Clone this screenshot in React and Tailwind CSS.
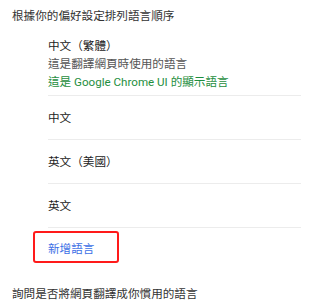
import React from 'react';

const languages = ['中文', '英文（美國）', '英文'];

function App() {
  return (
    <div className="w-[313px] h-[305px] bg-white overflow-hidden px-3 pt-[5px] text-[11.6px] text-[#333] font-['Noto_Sans_CJK_TC','Noto_Sans',sans-serif]">
      <div className="leading-5 h-5">根據你的偏好設定排列語言順序</div>

      <div className="ml-9 mt-[11px]">
        {/* 目前的主要語言 */}
        <div className="pb-[4px] border-b border-[#ececec]">
          <div className="leading-[18px] h-[18px] text-[#222]">中文（繁體）</div>
          <div className="leading-[18px] h-[18px] text-[#555]">這是翻譯網頁時使用的語言</div>
          <div className="leading-[18px] h-[18px] mt-[1px] text-[#1e8e3e] font-['Roboto','Noto_Sans_CJK_TC',sans-serif]">
            這是 Google Chrome UI 的顯示語言
          </div>
        </div>

        {languages.map((lang) => (
          <div key={lang} className="h-[44px] flex items-center border-b border-[#ececec] text-[#222]">
            {lang}
          </div>
        ))}
      </div>

      <div className="ml-[21px] mt-[3px] w-[86px] h-8 border-2 border-[#ff1a1a] rounded-[3px] flex items-center pl-[13px] pt-[3px] text-[#3c6fe6]">
        新增語言
      </div>

      <div className="mt-5 leading-5 h-5">詢問是否將網頁翻譯成你慣用的語言</div>
    </div>
  );
}

export default App;
